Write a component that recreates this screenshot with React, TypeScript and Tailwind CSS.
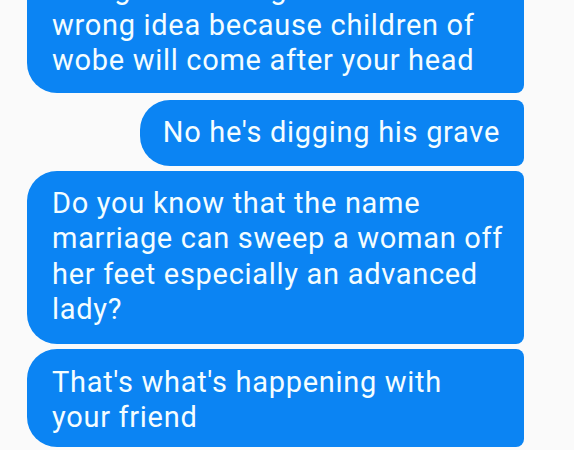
function Bubble({ lines, wide, className = '' }: { lines: string[]; wide?: boolean; className?: string }) {
  return (
    <div
      className={`bg-[#0b84f3] text-[#f4fdff] text-[29px] leading-[35.5px] tracking-[0.7px] whitespace-nowrap rounded-l-[30px] rounded-r-[8px] ${wide ? 'w-[497px] pl-[25px]' : 'pl-[23px] pr-[24px]'} ${className}`}
    >
      {lines.map((l, i) => (
        <div key={i}>{l}</div>
      ))}
    </div>
  );
}

export default function App() {
  return (
    <div className="w-[574px] h-[450px] overflow-hidden bg-[#fafafa]" style={{ fontFamily: 'Roboto, "Noto Sans", sans-serif' }}>
      <div className="flex flex-col items-end pr-[50px] -mt-[44px]">
        <Bubble
          wide
          className="pt-[16px] pb-[14px]"
          lines={['Going to rum to get solution is a', 'wrong idea because children of', 'wobe will come after your head']}
        />
        <Bubble className="mt-[7px] pt-[15px] pb-[16px]" lines={["No he's digging his grave"]} />
        <Bubble
          wide
          className="mt-[5px] pt-[14.5px] pb-[16.5px]"
          lines={['Do you know that the name', 'marriage can sweep a woman off', 'her feet especially an advanced', 'lady?']}
        />
        <Bubble
          wide
          className="mt-[5px] pt-[15.5px] pb-[11px]"
          lines={["That's what's happening with", 'your friend']}
        />
      </div>
    </div>
  );
}
